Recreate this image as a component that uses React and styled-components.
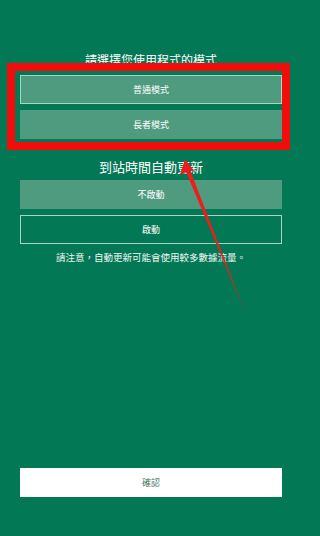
import { createGlobalStyle } from "styled-components";
import styled from "styled-components";

const Global = createGlobalStyle`
  html, body { margin: 0; padding: 0; background: #037855; }
  body { font-family: "Noto Sans CJK TC", "Noto Sans", sans-serif; }
`;

const Page = styled.div`
  position: relative;
  width: 298px;
  height: 536px;
  background: #037855;
  display: flex;
  flex-direction: column;
  padding: 53px 16px 39px 20px;
  box-sizing: border-box;
  color: #fff;
  overflow: hidden;
`;

const Title = styled.div`
  font-size: ${(p) => p.size}px;
  line-height: ${(p) => p.lh}px;
  text-align: center;
  color: #fff;
  margin: ${(p) => p.m || "0"};
`;

const Group = styled.div`
  display: flex;
  flex-direction: column;
  gap: 6px;
`;

const Option = styled.div`
  height: 29px;
  box-sizing: border-box;
  display: flex;
  align-items: center;
  justify-content: center;
  font-size: 9px;
  color: #fff;
  background: ${(p) => (p.filled ? "#4f9b7f" : "transparent")};
  border: 1px solid ${(p) => (p.selected ? "#a9d3c2" : "transparent")};
`;

const Note = styled.div`
  font-size: 9.5px;
  line-height: 12px;
  text-align: center;
  margin-top: 7px;
  color: #eef6f2;
`;

const Confirm = styled.div`
  margin-top: auto;
  height: 29px;
  background: #fff;
  display: flex;
  align-items: center;
  justify-content: center;
  font-size: 9px;
  color: #3f7a63;
`;

const Highlight = styled.div`
  position: absolute;
  left: 7px;
  top: 63px;
  width: 283px;
  height: 87px;
  box-sizing: border-box;
  border: 8px solid #f20d0d;
  pointer-events: none;
`;

const Arrow = styled.svg`
  position: absolute;
  left: 0;
  top: 0;
  pointer-events: none;
`;

export default function App() {
  return (
    <>
      <Global />
      <Page>
        <Title size={12} lh={14}>請選擇您使用程式的模式</Title>
        <Group style={{ marginTop: 8 }}>
          <Option filled selected>普通模式</Option>
          <Option filled>長者模式</Option>
        </Group>
        <Title size={13} lh={18} m="19px 0 4px">到站時間自動更新</Title>
        <Group>
          <Option filled>不啟動</Option>
          <Option selected>啟動</Option>
        </Group>
        <Note>請注意，自動更新可能會使用較多數據流量。</Note>
        <Confirm>確認</Confirm>
        <Highlight />
        <Arrow width="298" height="536">
          <polygon points="185,159 180,175 186,172 245,312 190,170 195,172" fill="#ee1c1c" />
        </Arrow>
      </Page>
    </>
  );
}
